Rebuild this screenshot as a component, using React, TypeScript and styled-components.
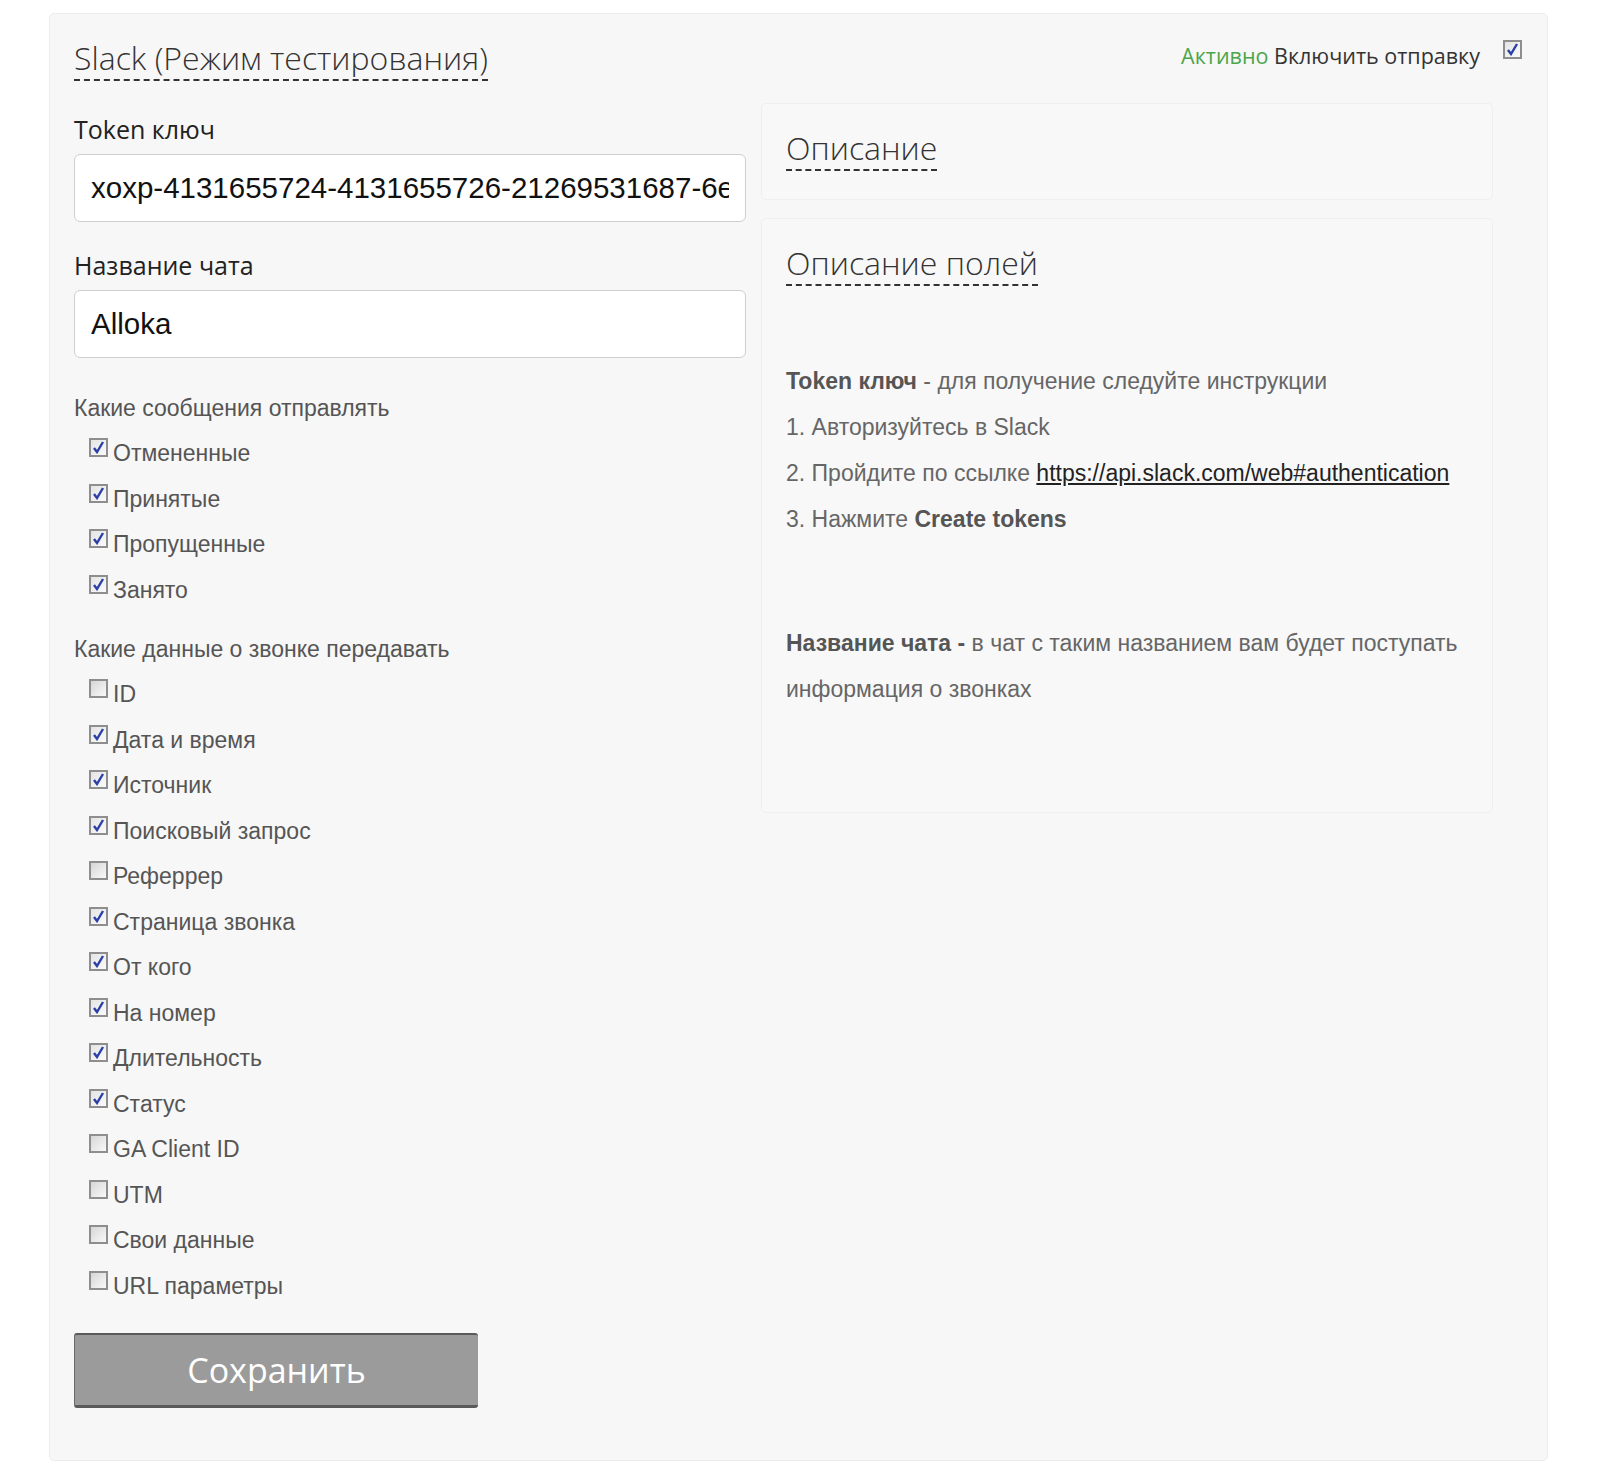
import styled, { createGlobalStyle } from 'styled-components';

const GlobalStyle = createGlobalStyle`
  html, body {
    margin: 0;
    padding: 0;
    background: #ffffff;
  }
  body {
    font-family: "Liberation Sans", Arial, sans-serif;
  }
`;

const Page = styled.div`
  width: 1600px;
  min-height: 1479px;
  padding: 13px 0 0 49px;
  box-sizing: border-box;
`;

const Card = styled.div`
  width: 1499px;
  height: 1448px;
  box-sizing: border-box;
  background: #f7f7f7;
  border: 1px solid #ececec;
  border-radius: 5px;
  padding: 24px 20px 0 24px;
`;

const Header = styled.div`
  display: flex;
  justify-content: space-between;
  align-items: flex-start;
  height: 64px;
`;

const Title = styled.h1`
  margin: 0;
  font-family: "Open Sans", sans-serif;
  font-weight: 300;
  font-size: 32px;
  line-height: 40px;
  color: #333;
  border-bottom: 2px dashed #333;
  padding-bottom: 1px;
`;

const Status = styled.div`
  display: flex;
  align-items: flex-start;
  gap: 23px;
  padding-top: 2px;
  font-family: "Open Sans", sans-serif;
  font-size: 21.5px;
  line-height: 30px;
  color: #333;
`;

const StatusText = styled.span`
  padding-top: 1px;
`;

const Green = styled.span`
  color: #4ba64b;
`;

const Body = styled.div`
  display: flex;
  gap: 15px;
`;

const LeftCol = styled.div`
  width: 672px;
  display: flex;
  flex-direction: column;
  padding-top: 12px;
`;

const RightCol = styled.div`
  width: 732px;
  display: flex;
  flex-direction: column;
  gap: 18px;
  padding-top: 1px;
`;

const FieldLabel = styled.div`
  font-family: "Open Sans", sans-serif;
  font-size: 25px;
  line-height: 30px;
  color: #222;
  margin-bottom: 10px;
`;

const TextInput = styled.input`
  width: 100%;
  height: 68px;
  box-sizing: border-box;
  border: 1px solid #cfcfcf;
  border-radius: 6px;
  background: #fff;
  padding: 0 16px;
  font-family: "Liberation Sans", Arial, sans-serif;
  font-size: 29.5px;
  color: #111;
  margin-bottom: 28px;
  outline: none;
`;

const SectionLabel = styled.div<{ $top: number }>`
  font-family: "Liberation Sans", Arial, sans-serif;
  font-size: 23px;
  line-height: 30px;
  color: #555;
  margin: ${(p) => p.$top}px 0 15px;
`;

const OptionList = styled.div`
  display: flex;
  flex-direction: column;
  padding-left: 15px;
`;

const Option = styled.label`
  display: flex;
  align-items: flex-start;
  height: 45.5px;
  font-family: "Liberation Sans", Arial, sans-serif;
  font-size: 23px;
  line-height: 30px;
  color: #555;
`;

const Box = styled.span<{ $checked: boolean }>`
  display: inline-flex;
  align-items: center;
  justify-content: center;
  flex: none;
  width: 19px;
  height: 19px;
  box-sizing: border-box;
  margin: 0 5px 0 0;
  border: 2px solid #8e8e8e;
  background: ${(p) =>
    p.$checked
      ? 'linear-gradient(135deg, #e4e4e4 0%, #fafafa 100%)'
      : 'linear-gradient(135deg, #d6d6d6 0%, #f9f9f9 100%)'};
`;

const Panel = styled.div<{ $height: number }>`
  height: ${(p) => p.$height}px;
  box-sizing: border-box;
  background: #f8f8f8;
  border: 1px solid #efefef;
  border-radius: 5px;
  padding: 24px 24px 0 24px;
`;

const PanelTitle = styled.h2`
  display: inline-block;
  margin: 0;
  font-family: "Open Sans", sans-serif;
  font-weight: 300;
  font-size: 32px;
  line-height: 40px;
  color: #333;
  border-bottom: 2px dashed #333;
  padding-bottom: 1px;
`;

const HelpText = styled.div`
  margin-top: 72px;
  font-family: "Liberation Sans", Arial, sans-serif;
  font-size: 23px;
  line-height: 46px;
  color: #666;

  b {
    color: #555;
  }
  a {
    color: #222;
    text-decoration: underline;
  }
`;

const Spacer = styled.div`
  height: 78px;
`;

const SaveButton = styled.button`
  margin-top: 17px;
  width: 404px;
  height: 75px;
  background: #9b9b9b;
  border: none;
  border-top: 2px solid #5a5a5a;
  border-left: 1px solid #6a6a6a;
  border-bottom: 3px solid #5a5a5a;
  border-radius: 3px;
  color: #fff;
  font-family: "Open Sans", sans-serif;
  font-size: 34px;
  cursor: pointer;
`;

const Check = ({ checked }: { checked: boolean }) => (
  <Box $checked={checked}>
    {checked && (
      <svg width="13" height="13" viewBox="0 0 13 13">
        <path d="M2 7 L5 11 L11 1" fill="none" stroke="#2b3fa8" strokeWidth="2.4" />
      </svg>
    )}
  </Box>
);

const messages = [
  { label: 'Отмененные', checked: true },
  { label: 'Принятые', checked: true },
  { label: 'Пропущенные', checked: true },
  { label: 'Занято', checked: true },
];

const fields = [
  { label: 'ID', checked: false },
  { label: 'Дата и время', checked: true },
  { label: 'Источник', checked: true },
  { label: 'Поисковый запрос', checked: true },
  { label: 'Реферрер', checked: false },
  { label: 'Страница звонка', checked: true },
  { label: 'От кого', checked: true },
  { label: 'На номер', checked: true },
  { label: 'Длительность', checked: true },
  { label: 'Статус', checked: true },
  { label: 'GA Client ID', checked: false },
  { label: 'UTM', checked: false },
  { label: 'Свои данные', checked: false },
  { label: 'URL параметры', checked: false },
];

const App = () => (
  <Page>
    <GlobalStyle />
    <Card>
      <Header>
        <Title>Slack (Режим тестирования)</Title>
        <Status>
          <StatusText>
            <Green>Активно</Green> Включить отправку
          </StatusText>
          <Check checked />
        </Status>
      </Header>
      <Body>
        <LeftCol>
          <FieldLabel>Token ключ</FieldLabel>
          <TextInput readOnly value="xoxp-4131655724-4131655726-21269531687-6e4f1d" />
          <FieldLabel>Название чата</FieldLabel>
          <TextInput readOnly value="Alloka" />
          <SectionLabel $top={7}>Какие сообщения отправлять</SectionLabel>
          <OptionList>
            {messages.map((m) => (
              <Option key={m.label}>
                <Check checked={m.checked} />
                {m.label}
              </Option>
            ))}
          </OptionList>
          <SectionLabel $top={14}>Какие данные о звонке передавать</SectionLabel>
          <OptionList>
            {fields.map((f) => (
              <Option key={f.label}>
                <Check checked={f.checked} />
                {f.label}
              </Option>
            ))}
          </OptionList>
          <div>
            <SaveButton>Сохранить</SaveButton>
          </div>
        </LeftCol>
        <RightCol>
          <Panel $height={97}>
            <PanelTitle>Описание</PanelTitle>
          </Panel>
          <Panel $height={595}>
            <PanelTitle>Описание полей</PanelTitle>
            <HelpText>
              <div>
                <b>Token ключ</b> - для получение следуйте инструкции
              </div>
              <div>1. Авторизуйтесь в Slack</div>
              <div>
                2. Пройдите по ссылке{' '}
                <a href="https://api.slack.com/web#authentication">https://api.slack.com/web#authentication</a>
              </div>
              <div>
                3. Нажмите <b>Create tokens</b>
              </div>
              <Spacer />
              <div>
                <b>Название чата -</b> в чат с таким названием вам будет поступать
              </div>
              <div>информация о звонках</div>
            </HelpText>
          </Panel>
        </RightCol>
      </Body>
    </Card>
  </Page>
);

export default App;
